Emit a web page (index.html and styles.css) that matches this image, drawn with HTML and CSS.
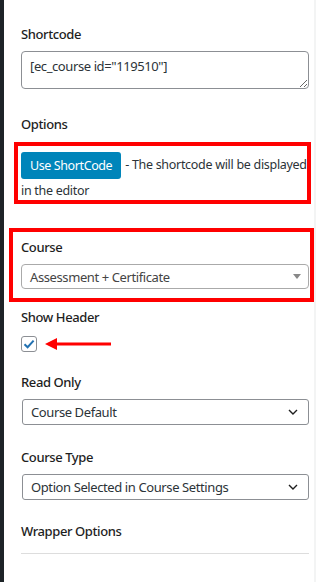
FILE: index.html
```html
<!DOCTYPE html>
<html lang="en">
<head>
    <meta charset="UTF-8">
    <meta name="viewport" content="width=device-width, initial-scale=1.0">
    <title>Course Block Settings</title>
    <link rel="stylesheet" href="styles.css">
</head>
<body>
    <div class="frame">
        <div class="admin-edge"></div>

        <div class="panel">
            <label class="field-label" for="shortcode">Shortcode</label>
            <textarea id="shortcode" class="shortcode-box">[ec_course id="119510"]</textarea>

            <div class="field-label label-options">Options</div>
            <div class="annotated block-options">
                <p class="shortcode-note"><button class="btn-primary">Use ShortCode</button> - The shortcode will be displayed in the editor</p>
                <div class="mark mark-options"></div>
            </div>

            <div class="annotated block-course">
                <div class="field-label">Course</div>
                <div class="select2">
                    <span>Assessment + Certificate</span>
                    <span class="select2-arrow"></span>
                </div>
                <div class="mark mark-course"></div>
            </div>

            <div class="field-label label-header">Show Header</div>
            <div class="check-row">
                <span class="checkbox">
                    <svg width="12" height="10" viewBox="0 0 12 10">
                        <path d="M1.5 5.2 L4.6 8.2 L10.6 1.6" fill="none" stroke="#2271b1" stroke-width="2"/>
                    </svg>
                </span>
                <svg class="arrow" width="66" height="12" viewBox="0 0 66 12">
                    <polygon points="0,6 12,0 12,12" fill="#f00"/>
                    <rect x="10" y="4.5" width="56" height="3" fill="#f00"/>
                </svg>
            </div>

            <div class="field-label label-readonly">Read Only</div>
            <div class="select">
                <span>Course Default</span>
                <svg class="chevron" width="10" height="6" viewBox="0 0 10 6">
                    <path d="M1 1 L5 5 L9 1" fill="none" stroke="#1e1e1e" stroke-width="1.4"/>
                </svg>
            </div>

            <div class="field-label label-type">Course Type</div>
            <div class="select">
                <span>Option Selected in Course Settings</span>
                <svg class="chevron" width="10" height="6" viewBox="0 0 10 6">
                    <path d="M1 1 L5 5 L9 1" fill="none" stroke="#1e1e1e" stroke-width="1.4"/>
                </svg>
            </div>

            <div class="field-label label-wrapper">Wrapper Options</div>
            <hr class="divider">
        </div>
    </div>
</body>
</html>
```

FILE: styles.css
```css
* {
    margin: 0;
    padding: 0;
    box-sizing: border-box;
}

body {
    font-family: 'Noto Sans', 'Liberation Sans', sans-serif;
    font-size: 13px;
    line-height: 18px;
    letter-spacing: -0.4px;
    color: #1e1e1e;
    background: #fff;
}

.frame {
    display: flex;
    min-height: 582px;
}

.admin-edge {
    width: 4px;
    background: #1d2327;
    flex-shrink: 0;
}

.panel {
    flex: 1;
    padding: 25px 5px 0 17px;
    border-right: 2px solid #f3f4f4;
    display: flex;
    flex-direction: column;
}

.field-label {
    display: block;
    font-weight: 500;
    color: #1e1e1e;
}

.label-options { margin-top: 26px; }
.label-header { margin-top: 19px; }
.label-readonly { margin-top: 21px; }
.label-type { margin-top: 23px; }
.label-wrapper { margin-top: 22px; }

.shortcode-box {
    margin-top: 8px;
    width: 100%;
    height: 38px;
    padding: 5px 8px;
    border: 1px solid #8c8f94;
    border-radius: 4px;
    font-family: inherit;
    font-size: 13px;
    line-height: 18px;
    letter-spacing: -0.4px;
    color: #2c3338;
    resize: vertical;
}

.annotated {
    position: relative;
}

.block-options { margin-top: 19px; }
.block-course { margin-top: 35px; }

.shortcode-note {
    font-size: 12.5px;
    line-height: 24px;
    letter-spacing: -0.3px;
    color: #2c3338;
}

.btn-primary {
    display: inline-block;
    vertical-align: middle;
    height: 27px;
    padding: 0 9px;
    margin-right: 1px;
    background: #0085ba;
    color: #fff;
    border: none;
    border-radius: 3px;
    font-family: inherit;
    font-size: 12.5px;
    letter-spacing: -0.4px;
    cursor: pointer;
}

/* red annotation frames drawn over the screenshot */
.mark {
    position: absolute;
    border: 4px solid #f00;
    pointer-events: none;
}

.mark-options {
    top: -10px;
    left: -7px;
    right: -2px;
    bottom: -1px;
}

.mark-course {
    top: -10px;
    left: -12px;
    right: -5px;
    bottom: -13px;
}

.select2 {
    margin-top: 8px;
    height: 25px;
    padding: 0 8px;
    border: 1px solid #aaa;
    border-radius: 4px;
    display: flex;
    align-items: center;
    justify-content: space-between;
    color: #444;
}

.select2-arrow {
    width: 0;
    height: 0;
    border-left: 4px solid transparent;
    border-right: 4px solid transparent;
    border-top: 5px solid #888;
    margin-right: -1px;
}

.check-row {
    margin-top: 10px;
    display: flex;
    align-items: center;
    gap: 8px;
}

.checkbox {
    width: 16px;
    height: 16px;
    border: 1px solid #8c8f94;
    border-radius: 3px;
    display: flex;
    align-items: center;
    justify-content: center;
}

.select {
    margin-top: 8px;
    margin-left: 1px;
    height: 26px;
    padding: 0 10px 0 8px;
    border: 1px solid #8c8f94;
    border-radius: 3px;
    display: flex;
    align-items: center;
    justify-content: space-between;
    color: #2c3338;
}

.divider {
    margin-top: 13px;
    border: none;
    border-top: 1px solid #ddd;
}
```
